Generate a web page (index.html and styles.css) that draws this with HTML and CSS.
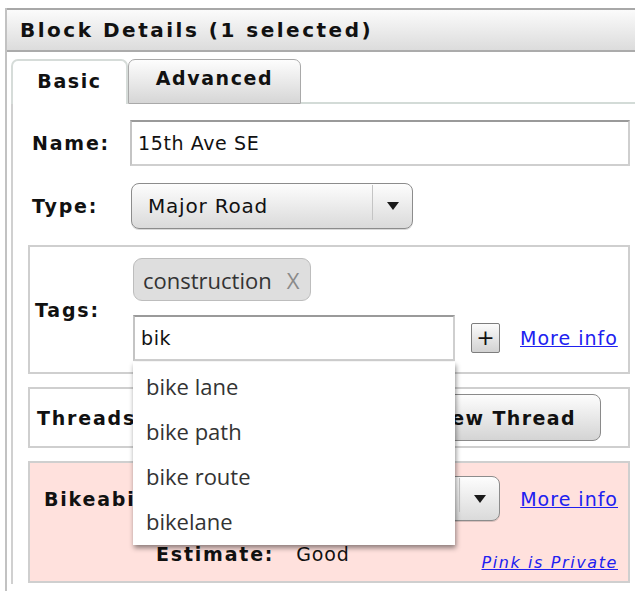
FILE: index.html
```html
<!DOCTYPE html>
<html lang="en">
<head>
<meta charset="utf-8">
<title>Block Details</title>
<link rel="stylesheet" href="styles.css">
</head>
<body>
<div class="panel">
  <div class="panel-head">Block Details (1 selected)</div>
  <div class="panel-body">
    <div class="tabs">
      <div class="tab tab-active">Basic</div>
      <div class="tab">Advanced</div>
      <div class="tab-fill"></div>
    </div>
    <div class="pane">
      <div class="row">
        <span class="label">Name:</span>
        <input class="text-input name-input" type="text" value="15th Ave SE">
      </div>
      <div class="row row-type">
        <span class="label">Type:</span>
        <div class="select type-select">
          <span class="select-text">Major Road</span>
          <span class="select-btn"><span class="arrow"></span></span>
        </div>
      </div>

      <div class="box tags-box">
        <span class="label box-label">Tags:</span>
        <div class="tag-col">
          <span class="chip">construction<span class="chip-x">X</span></span>
          <div class="tag-entry">
            <div class="combo">
              <input class="text-input tag-input" type="text" value="bik">
              <ul class="suggest">
                <li>bike lane</li>
                <li>bike path</li>
                <li>bike route</li>
                <li>bikelane</li>
              </ul>
            </div>
            <button class="plus-btn" type="button">+</button>
            <a class="link more-link" href="#">More info</a>
          </div>
        </div>
      </div>

      <div class="box threads-box">
        <span class="label">Threads</span>
        <button class="btn" type="button">New Thread</button>
      </div>

      <div class="box bike-box">
        <div class="bike-row">
          <span class="label bike-label">Bikeability:</span>
          <div class="select bike-select">
            <span class="select-text">Good</span>
            <span class="select-btn"><span class="arrow"></span></span>
          </div>
          <a class="link more-link" href="#">More info</a>
        </div>
        <div class="estimate-row">
          <span class="label">Estimate:</span>
          <span class="estimate-value">Good</span>
          <a class="link private-link" href="#">Pink is Private</a>
        </div>
      </div>
    </div>
  </div>
</div>
</body>
</html>
```
FILE: styles.css
```css
* {
  box-sizing: border-box;
}

body {
  margin: 0;
  padding: 8px 0 0 5px;
  background: #fff;
  font-family: "DejaVu Sans", Verdana, sans-serif;
  color: #111;
  overflow: hidden;
}

.panel {
  border-left: 2px solid #c2c2c2;
  height: 583px;
}

.panel-head {
  height: 44px;
  border-top: 2px solid #a8a8a8;
  border-bottom: 2px solid #ababab;
  background: linear-gradient(#fbfbfb, #dcdcdc);
  padding-left: 13px;
  font-size: 20px;
  font-weight: bold;
  letter-spacing: 2.5px;
  line-height: 40px;
}

.panel-body {
  padding: 5px 0 0 4px;
}

/* tab strip */
.tabs {
  display: flex;
  align-items: flex-end;
  height: 47px;
}

.tab {
  display: flex;
  align-items: center;
  justify-content: center;
  height: 45px;
  width: 173px;
  border: 1px solid #a9a9a9;
  border-radius: 7px 7px 0 0;
  background: linear-gradient(#fdfdfd, #d6d6d6);
  font-size: 19px;
  font-weight: bold;
  letter-spacing: 1.6px;
  padding-bottom: 8px;
}

.tab-active {
  width: 117px;
  height: 45px;
  border: 2px solid #d6dcd9;
  border-bottom: none;
  background: #fff;
  padding-bottom: 4px;
  padding-top: 0;
}

.tab-fill {
  flex: 1;
  border-bottom: 2px solid #d3dbd7;
}

/* tab content */
.pane {
  border-left: 2px solid #d0d0d0;
  padding: 16px 5px 0 15px;
  height: 480px;
}

.row {
  display: flex;
  align-items: center;
  padding-left: 4px;
}

.row-type {
  margin-top: 17px;
}

.label {
  font-size: 19px;
  font-weight: bold;
  letter-spacing: 1.8px;
  color: #111;
}

.row .label {
  width: 98px;
}

.text-input {
  height: 46px;
  border: 2px solid #cfcfcf;
  border-top-color: #9a9a9a;
  border-left-color: #c4c4c4;
  font-family: "DejaVu Sans", Verdana, sans-serif;
  font-size: 19px;
  letter-spacing: 0.6px;
  color: #111;
  padding: 0 0 0 6px;
  outline: none;
  background: #fff;
}

.name-input {
  flex: 1;
}

/* drop-down select look-alike */
.select {
  display: flex;
  align-items: stretch;
  height: 46px;
  border: 1px solid #8c8c8c;
  border-radius: 8px;
  background: linear-gradient(#fdfdfd, #dadada);
  box-shadow: 0 1px 0 rgba(0, 0, 0, 0.15);
}

.select-text {
  flex: 1;
  display: flex;
  align-items: center;
  padding-left: 16px;
  font-size: 20px;
  letter-spacing: 0.8px;
}

.select-btn {
  width: 40px;
  display: flex;
  align-items: center;
  justify-content: center;
  border-left: 1px solid #c4c4c4;
  margin: 1px 0 8px;
  padding-top: 7px;
}

.arrow {
  width: 0;
  height: 0;
  border-left: 6px solid transparent;
  border-right: 6px solid transparent;
  border-top: 8px solid #1a1a1a;
}

.type-select {
  width: 282px;
  margin-left: 1px;
}

/* grouped sections */
.box {
  border: 2px solid #cfcfcf;
  margin-top: 16px;
}

.tags-box {
  display: flex;
  align-items: center;
  padding: 11px 10px 11px 5px;
}

.box-label {
  width: 98px;
}

.tag-col {
  display: flex;
  flex-direction: column;
  align-items: flex-start;
}

.chip {
  display: inline-flex;
  align-items: center;
  height: 43px;
  padding: 0 11px 0 9px;
  border: 1px solid #bdbdbd;
  border-radius: 9px;
  background: #dedede;
  font-family: "Open Sans", "Noto Sans", sans-serif;
  font-size: 22px;
  color: #333;
}

.chip-x {
  margin-left: 15px;
  color: #8a8a8a;
  font-size: 22px;
}

.tag-entry {
  display: flex;
  align-items: center;
  margin-top: 14px;
}

.combo {
  position: relative;
}

.tag-input {
  width: 322px;
  font-size: 19px;
}

.suggest {
  position: absolute;
  top: 47px;
  left: 0;
  width: 322px;
  margin: 0;
  padding: 2px 0 1px;
  list-style: none;
  background: #fff;
  box-shadow: 1px 3px 5px rgba(0, 0, 0, 0.45);
  z-index: 10;
}

.suggest li {
  height: 45px;
  line-height: 45px;
  padding-left: 13px;
  font-family: "Open Sans", "Noto Sans", sans-serif;
  font-size: 22px;
  color: #333;
}

.plus-btn {
  width: 29px;
  height: 30px;
  margin-left: 16px;
  padding: 0;
  border: 1px solid #7d7d7d;
  border-radius: 2px;
  background: linear-gradient(#fbfbfb, #d2d2d2);
  font-family: "DejaVu Sans", sans-serif;
  font-size: 22px;
  line-height: 26px;
  color: #111;
}

.link {
  color: #2020f0;
  text-decoration: underline;
  font-size: 19px;
  letter-spacing: 1px;
}

.more-link {
  margin-left: 20px;
}

.threads-box {
  display: flex;
  align-items: center;
  justify-content: space-between;
  height: 61px;
  margin-top: 13px;
  padding: 0 27px 0 7px;
}

.btn {
  height: 47px;
  padding: 0 24px 0 38px;
  border: 1px solid #8a8a8a;
  border-radius: 8px;
  background: linear-gradient(#fdfdfd, #d4d4d4);
  font-family: "DejaVu Sans", sans-serif;
  font-size: 19px;
  font-weight: bold;
  letter-spacing: 1.4px;
  color: #111;
}

.bike-box {
  height: 122px;
  margin-top: 13px;
  padding: 13px 10px 0 14px;
  background: #ffe1dd;
}

.bike-row {
  display: flex;
  align-items: center;
}

.bike-label {
  flex: 1;
}

.bike-select {
  width: 200px;
  height: 45px;
}

.estimate-row {
  display: flex;
  align-items: flex-start;
  margin-top: 22px;
  padding-left: 112px;
}

.estimate-value {
  margin-left: 22px;
  font-size: 19px;
  letter-spacing: 0.8px;
  line-height: 22px;
}

.estimate-row .label {
  line-height: 22px;
}

.private-link {
  margin-left: auto;
  margin-top: 9px;
  font-size: 16px;
  font-style: italic;
  letter-spacing: 1.6px;
  line-height: 22px;
}
```
